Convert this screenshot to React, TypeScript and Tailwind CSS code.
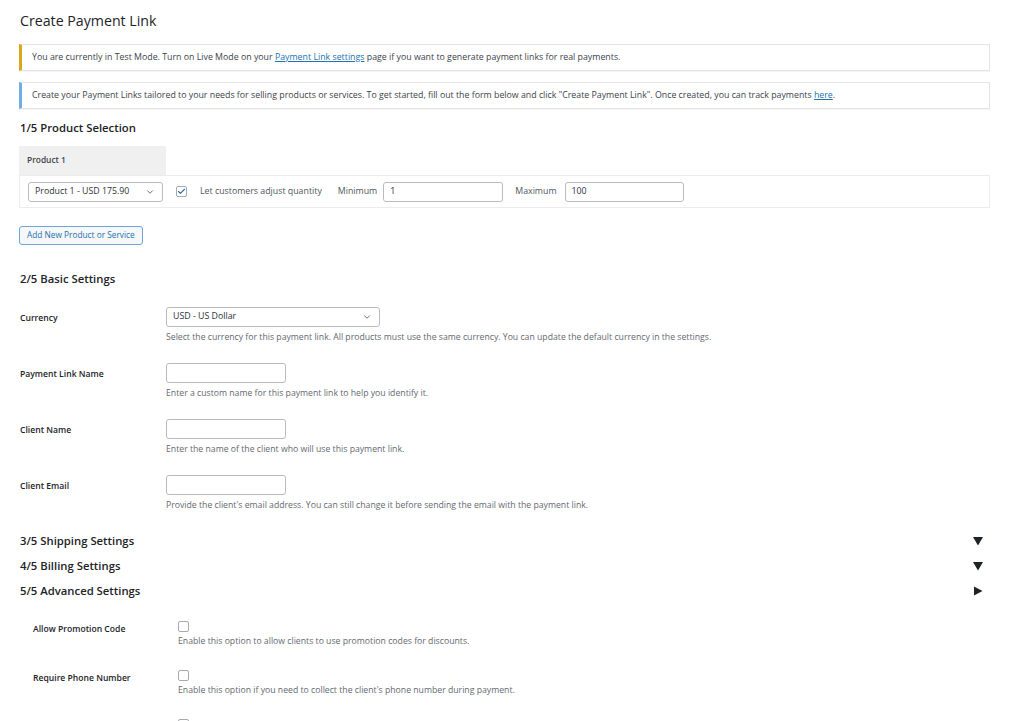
import { ChevronDown, Check } from "lucide-react";

const font = { fontFamily: '"Open Sans", "Noto Sans", sans-serif' };

const Select = ({ value, w }: { value: string; w: string }) => (
  <div
    className={`${w} h-[20px] flex items-center justify-between border border-[#b8bcc2] rounded-[3px] bg-white pl-[6px] pr-[7px] text-[8.8px] text-[#2c3338]`}
  >
    <span>{value}</span>
    <ChevronDown size={10} strokeWidth={2} className="text-[#50575e]" />
  </div>
);

const Input = ({ value, w }: { value?: string; w: string }) => (
  <div
    className={`${w} h-[20px] flex items-center border border-[#b8bcc2] rounded-[3px] bg-white px-[6px] text-[8.8px] text-[#2c3338]`}
  >
    {value}
  </div>
);

const Box = ({ checked }: { checked?: boolean }) => (
  <div className="w-[11px] h-[11px] border border-[#a7aaad] rounded-[2px] bg-white flex items-center justify-center">
    {checked && <Check size={9} strokeWidth={3} className="text-[#2271b1]" />}
  </div>
);

const Tri = ({ dir }: { dir: "down" | "right" }) => (
  <svg width="10" height="10" viewBox="0 0 10 10" className="mr-[7px]">
    {dir === "down" ? (
      <polygon points="0,1 10,1 5,9.5" fill="#1d2327" />
    ) : (
      <polygon points="1,0.5 9.5,5 1,9.5" fill="#1d2327" />
    )}
  </svg>
);

const basicRows = [
  {
    label: "Currency",
    field: <Select value="USD - US Dollar" w="w-[214px]" />,
    desc: "Select the currency for this payment link. All products must use the same currency. You can update the default currency in the settings.",
  },
  {
    label: "Payment Link Name",
    field: <Input w="w-[120px]" />,
    desc: "Enter a custom name for this payment link to help you identify it.",
  },
  {
    label: "Client Name",
    field: <Input w="w-[120px]" />,
    desc: "Enter the name of the client who will use this payment link.",
  },
  {
    label: "Client Email",
    field: <Input w="w-[120px]" />,
    desc: "Provide the client's email address. You can still change it before sending the email with the payment link.",
  },
];

const advancedRows = [
  {
    label: "Allow Promotion Code",
    desc: "Enable this option to allow clients to use promotion codes for discounts.",
  },
  {
    label: "Require Phone Number",
    desc: "Enable this option if you need to collect the client's phone number during payment.",
  },
];

export default function App() {
  return (
    <div style={font} className="h-[721px] overflow-hidden bg-white text-[#3c434a] px-[19px] pr-[34px]">
      <h1 className="pt-[11px] text-[14.2px] leading-[20px] text-[#1d2327] pl-[1px]">Create Payment Link</h1>

      <div className="mt-[13px] h-[27px] flex items-center border border-[#e3e4e6] border-l-[3px] border-l-[#dba617] pl-[10px] text-[8.8px] shadow-[0_1px_1px_rgba(0,0,0,0.04)]">
        <span>
          You are currently in Test Mode. Turn on Live Mode on your{" "}
          <span className="text-[#2271b1] underline">Payment Link settings</span> page if you want to generate
          payment links for real payments.
        </span>
      </div>

      <div className="mt-[11px] h-[27px] flex items-center border border-[#e3e4e6] border-l-[3px] border-l-[#72aee6] pl-[10px] text-[8.8px] shadow-[0_1px_1px_rgba(0,0,0,0.04)]">
        <span>
          Create your Payment Links tailored to your needs for selling products or services. To get started, fill out
          the form below and click "Create Payment Link". Once created, you can track payments{" "}
          <span className="text-[#2271b1] underline">here</span>.
        </span>
      </div>

      <h2 className="mt-[11px] text-[11.3px] leading-[16px] font-semibold text-[#1d2327] pl-[1px]">
        1/5 Product Selection
      </h2>

      <div className="mt-[10px] w-[147px] h-[29px] bg-[#f0f0f1] flex items-center pl-[8px] text-[8.4px] font-semibold text-[#3c434a]">
        Product 1
      </div>
      <div className="h-[33px] border border-[#ececec] flex items-center pl-[8px] text-[8.8px] text-[#50575e]">
        <Select value="Product 1 - USD 175.90" w="w-[135px]" />
        <div className="ml-[13px]">
          <Box checked />
        </div>
        <span className="ml-[13px]">Let customers adjust quantity</span>
        <span className="ml-[16px]">Minimum</span>
        <div className="ml-[6px]">
          <Input value="1" w="w-[120px]" />
        </div>
        <span className="ml-[12px]">Maximum</span>
        <div className="ml-[8px]">
          <Input value="100" w="w-[119px]" />
        </div>
      </div>

      <button className="mt-[18px] h-[19px] px-[7px] border border-[#6da5d8] rounded-[3px] bg-[#f6f7f7] text-[8.3px] text-[#2271b1]">
        Add New Product or Service
      </button>

      <h2 className="mt-[26px] text-[11.3px] leading-[16px] font-semibold text-[#1d2327] pl-[1px]">
        2/5 Basic Settings
      </h2>

      <div className="mt-[10px]">
        {basicRows.map((r) => (
          <div key={r.label} className="flex py-[10px]">
            <div className="w-[147px] pl-[1px] h-[20px] pt-[2px] flex items-center text-[8.6px] font-semibold text-[#1d2327]">
              {r.label}
            </div>
            <div className="flex flex-col">
              {r.field}
              <p className="mt-[4px] leading-[12px] text-[8.7px] text-[#646970]">{r.desc}</p>
            </div>
          </div>
        ))}
      </div>

      <div className="mt-[12px] flex flex-col gap-[9px]">
        {[
          ["3/5 Shipping Settings", "down"],
          ["4/5 Billing Settings", "down"],
          ["5/5 Advanced Settings", "right"],
        ].map(([t, d]) => (
          <div key={t} className="flex items-center justify-between h-[16px]">
            <h2 className="text-[11.3px] leading-[16px] font-semibold text-[#1d2327] pl-[1px]">{t}</h2>
            <Tri dir={d as "down" | "right"} />
          </div>
        ))}
      </div>

      <div className="mt-[11px] pl-[14px]">
        {advancedRows.map((r) => (
          <div key={r.label} className="flex pt-[11px] pb-[12px]">
            <div className="w-[145px] leading-[16px] text-[8.6px] font-semibold text-[#1d2327]">
              {r.label}
            </div>
            <div className="flex flex-col">
              <Box />
              <p className="mt-[3px] leading-[12px] text-[8.7px] text-[#646970]">{r.desc}</p>
            </div>
          </div>
        ))}
        <div className="flex pt-[11px]">
          <div className="w-[145px]" />
          <Box />
        </div>
      </div>
    </div>
  );
}
